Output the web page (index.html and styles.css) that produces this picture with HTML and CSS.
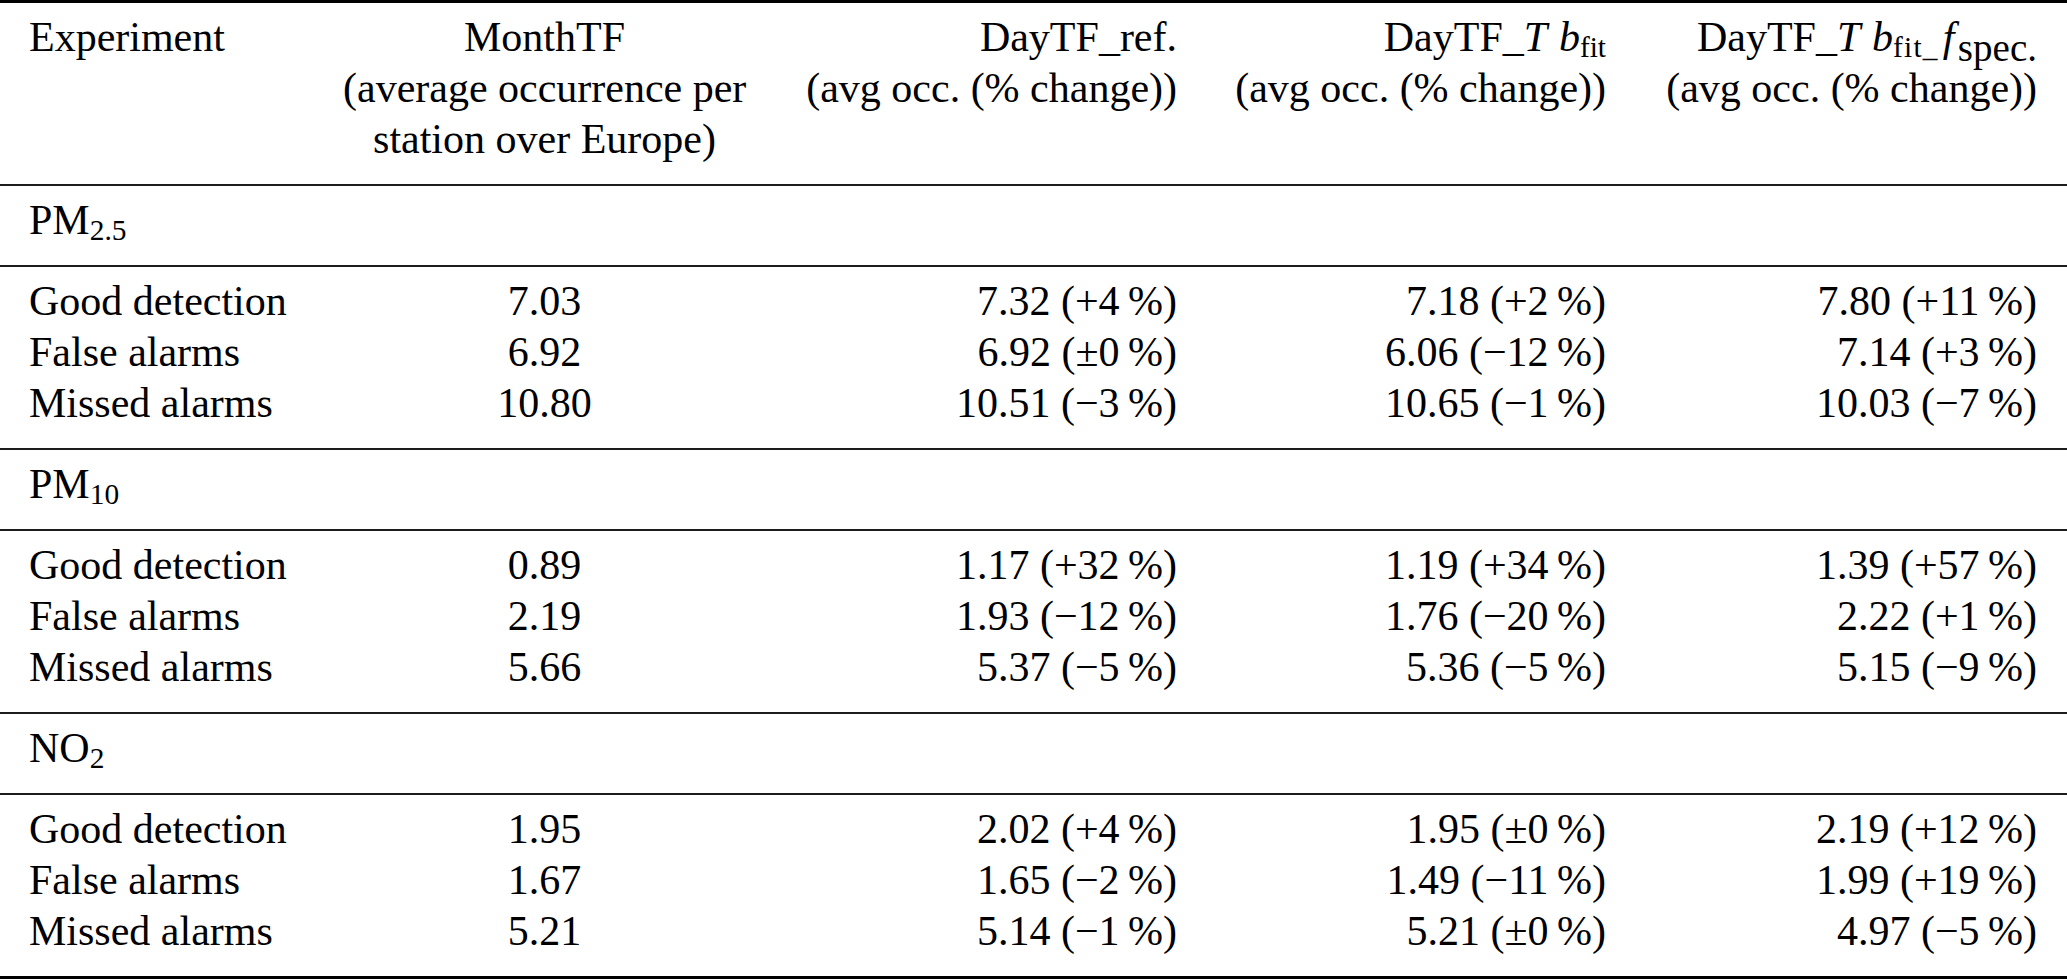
FILE: index.html
```html
<!DOCTYPE html>
<html lang="en">
<head>
<meta charset="utf-8">
<title>Table</title>
<link rel="stylesheet" href="styles.css">
</head>
<body>
<table class="results">
  <colgroup>
    <col class="c-exp">
    <col class="c-month">
    <col class="c-ref">
    <col class="c-tb">
    <col class="c-tbf">
  </colgroup>
  <thead>
    <tr>
      <th class="left">Experiment</th>
      <th class="center">MonthTF<br>(average occurrence per<br>station over Europe)</th>
      <th class="right">DayTF_ref.<br>(avg occ. (% change))</th>
      <th class="right">DayTF_<i class="mt">T</i><i class="mb">b</i><sub>fit</sub><br>(avg occ. (% change))</th>
      <th class="right">DayTF_<i class="mt">T</i><i class="mb">b</i><sub class="fitu">fit_</sub><i class="mf">f</i><sub class="spec">spec.</sub><br>(avg occ. (% change))</th>
    </tr>
  </thead>
  <tbody>
    <tr class="section"><td colspan="5">PM<sub>2.5</sub></td></tr>
    <tr class="first"><td>Good detection</td><td class="center">7.03</td><td class="right">7.32 (+4&thinsp;%)</td><td class="right">7.18 (+2&thinsp;%)</td><td class="right">7.80 (+11&thinsp;%)</td></tr>
    <tr><td>False alarms</td><td class="center">6.92</td><td class="right">6.92 (±0&thinsp;%)</td><td class="right">6.06 (−12&thinsp;%)</td><td class="right">7.14 (+3&thinsp;%)</td></tr>
    <tr class="last"><td>Missed alarms</td><td class="center">10.80</td><td class="right">10.51 (−3&thinsp;%)</td><td class="right">10.65 (−1&thinsp;%)</td><td class="right">10.03 (−7&thinsp;%)</td></tr>

    <tr class="section"><td colspan="5">PM<sub>10</sub></td></tr>
    <tr class="first"><td>Good detection</td><td class="center">0.89</td><td class="right">1.17 (+32&thinsp;%)</td><td class="right">1.19 (+34&thinsp;%)</td><td class="right">1.39 (+57&thinsp;%)</td></tr>
    <tr><td>False alarms</td><td class="center">2.19</td><td class="right">1.93 (−12&thinsp;%)</td><td class="right">1.76 (−20&thinsp;%)</td><td class="right">2.22 (+1&thinsp;%)</td></tr>
    <tr class="last"><td>Missed alarms</td><td class="center">5.66</td><td class="right">5.37 (−5&thinsp;%)</td><td class="right">5.36 (−5&thinsp;%)</td><td class="right">5.15 (−9&thinsp;%)</td></tr>

    <tr class="section"><td colspan="5">NO<sub>2</sub></td></tr>
    <tr class="first"><td>Good detection</td><td class="center">1.95</td><td class="right">2.02 (+4&thinsp;%)</td><td class="right">1.95 (±0&thinsp;%)</td><td class="right">2.19 (+12&thinsp;%)</td></tr>
    <tr><td>False alarms</td><td class="center">1.67</td><td class="right">1.65 (−2&thinsp;%)</td><td class="right">1.49 (−11&thinsp;%)</td><td class="right">1.99 (+19&thinsp;%)</td></tr>
    <tr class="last final"><td>Missed alarms</td><td class="center">5.21</td><td class="right">5.14 (−1&thinsp;%)</td><td class="right">5.21 (±0&thinsp;%)</td><td class="right">4.97 (−5&thinsp;%)</td></tr>
  </tbody>
</table>
</body>
</html>
```
FILE: styles.css
```css
html, body {
  margin: 0;
  padding: 0;
  background: #ffffff;
}

body {
  font-family: "Liberation Serif", "Times New Roman", serif;
  font-size: 42px;
  line-height: 51px;
  color: #000000;
}

.results {
  width: 2067px;
  table-layout: fixed;
  border-collapse: separate;
  border-spacing: 0;
}

.c-exp { width: 314px; }
.c-month { width: 461px; }
.c-ref { width: 431px; }
.c-tb { width: 429px; }
.c-tbf { width: 432px; }

.results th,
.results td {
  padding: 0 29px;
  font-weight: normal;
  vertical-align: top;
  white-space: nowrap;
  text-align: left;
}

.results th:last-child,
.results td:last-child {
  padding-right: 30px;
}

.results thead th {
  border-top: 3px solid #000000;
  padding-top: 9px;
  padding-bottom: 19px;
}

.results .center { text-align: center; }
.results .right { text-align: right; }

.results tr.section td {
  border-top: 2px solid #1c1c1c;
  padding-top: 9px;
  padding-bottom: 19px;
}

.results tr.first td {
  border-top: 2px solid #1c1c1c;
  padding-top: 9px;
}

.results tr.last td {
  padding-bottom: 19px;
}

.results tr.final td {
  border-bottom: 3px solid #000000;
}

sub {
  font-size: 0.7em;
  line-height: 0;
  vertical-align: -0.19em;
}

sub.fitu {
  letter-spacing: 0.04em;
}

sub.spec {
  font-size: 0.93em;
  vertical-align: -0.25em;
}

.mt {
  font-style: italic;
  padding-right: 0.28em;
}

.mb {
  font-style: italic;
}

.mf {
  font-style: italic;
  padding-left: 0.1em;
  padding-right: 0.08em;
}
```
